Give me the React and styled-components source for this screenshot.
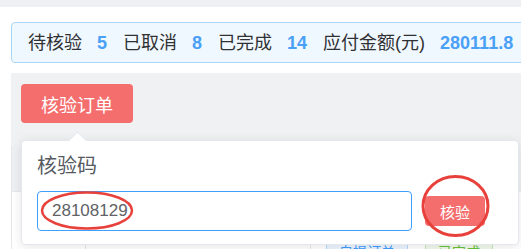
import React from "react";
import styled, { createGlobalStyle } from "styled-components";

const GlobalStyle = createGlobalStyle`
  html, body {
    margin: 0;
    padding: 0;
    background: #ffffff;
  }
  body {
    font-family: "Liberation Sans", "Noto Sans CJK SC", sans-serif;
    color: #303133;
  }
`;

const Page = styled.div`
  position: relative;
  width: 521px;
  height: 249px;
  overflow: hidden;
  background: #ffffff;
`;

const TopStrip = styled.div`
  height: 7px;
  background: #eef0f3;
`;

const Content = styled.div`
  width: 580px;
  padding-left: 11px;
  padding-top: 15px;
`;

const Summary = styled.div`
  display: flex;
  align-items: center;
  height: 39px;
  padding-left: 16px;
  background: #f0f8ff;
  border: 1px solid #a8d6f7;
  border-radius: 4px;
`;

const Label = styled.span`
  font-size: 18px;
  line-height: 24px;
  color: #303133;
  white-space: nowrap;
`;

const Count = styled.span`
  font-size: 18px;
  font-weight: bold;
  line-height: 24px;
  color: #4aa0f6;
  margin: 0 16px 0 15px;
`;

const Toolbar = styled.div`
  margin-top: 10px;
  height: 73px;
  padding: 11px 10px 0;
  box-sizing: border-box;
  background: #f0f1f3;
`;

const DangerButton = styled.button`
  height: 39px;
  padding: 0 ${(p) => p.$pad || 20}px;
  border: none;
  border-radius: 4px;
  background: #f56e6e;
  color: #ffffff;
  font-family: "Liberation Sans", "Noto Sans CJK SC", sans-serif;
  font-size: ${(p) => p.$size || 18}px;
  cursor: pointer;
`;

const Table = styled.div`
  border-left: 1px solid #e6e8ec;
`;

const HeadRow = styled.div`
  display: grid;
  grid-template-columns: 74px 225px 1fr;
  height: 45px;
  background: #eef0f4;
  border-bottom: 1px solid #e6e8ec;
`;

const BodyRow = styled.div`
  display: grid;
  grid-template-columns: 74px 225px 1fr;
  height: 90px;
`;

const Cell = styled.div`
  display: flex;
  align-items: flex-start;
  gap: 17px;
  padding: 46px 0 0 15px;
  border-right: 1px solid #e6e8ec;
`;

const Tag = styled.span`
  display: inline-block;
  height: 28px;
  line-height: 26px;
  padding: 0 12px;
  font-size: 14px;
  border-radius: 4px;
  border: 1px solid ${(p) => (p.$green ? "#c2e7b0" : "#b3d8ff")};
  background: ${(p) => (p.$green ? "#f0f9eb" : "#ecf5ff")};
  color: ${(p) => (p.$green ? "#67c23a" : "#409eff")};
`;

const Popover = styled.div`
  position: absolute;
  left: 21px;
  top: 140px;
  width: 498px;
  height: 105px;
  box-sizing: border-box;
  padding: 11px 15px 0;
  background: #ffffff;
  border: 1px solid #e4e7ed;
  border-radius: 4px;
  box-shadow: 0 2px 12px rgba(0, 0, 0, 0.1);

  &::before {
    content: "";
    position: absolute;
    left: 49px;
    top: -7px;
    width: 12px;
    height: 12px;
    background: #ffffff;
    border-left: 1px solid #e4e7ed;
    border-top: 1px solid #e4e7ed;
    transform: rotate(45deg);
  }
`;

const PopTitle = styled.div`
  font-size: 20px;
  line-height: 28px;
  color: #555a60;
`;

const FormRow = styled.div`
  display: flex;
  align-items: center;
  gap: 13px;
  margin-top: 11px;
`;

const CodeInput = styled.div`
  width: 375px;
  height: 40px;
  box-sizing: border-box;
  display: flex;
  align-items: center;
  padding-left: 14px;
  border: 1px solid #409eff;
  border-radius: 4px;
  font-size: 17px;
  color: #606266;
`;

const Marks = styled.svg`
  position: absolute;
  left: 0;
  top: 0;
  pointer-events: none;
`;

export default function App() {
  return (
    <Page>
      <GlobalStyle />
      <TopStrip />
      <Content>
        <Summary>
          <Label>待核验</Label>
          <Count>5</Count>
          <Label>已取消</Label>
          <Count>8</Count>
          <Label>已完成</Label>
          <Count>14</Count>
          <Label>应付金额(元)</Label>
          <Count>280111.8</Count>
        </Summary>
        <Toolbar>
          <DangerButton>核验订单</DangerButton>
        </Toolbar>
        <Table>
          <HeadRow>
            <Cell />
            <Cell />
            <Cell />
          </HeadRow>
          <BodyRow>
            <Cell />
            <Cell />
            <Cell>
              <Tag>自提订单</Tag>
              <Tag $green>已完成</Tag>
            </Cell>
          </BodyRow>
        </Table>
      </Content>

      <Popover>
        <PopTitle>核验码</PopTitle>
        <FormRow>
          <CodeInput>28108129</CodeInput>
          <DangerButton $pad={15} $size={15} style={{ height: 30, width: 60 }}>
            核验
          </DangerButton>
        </FormRow>
      </Popover>

      <Marks width="521" height="249" viewBox="0 0 521 249">
        <ellipse cx="87" cy="210.5" rx="45" ry="18" fill="none" stroke="#e8413b" strokeWidth="2.5" />
        <ellipse cx="455.5" cy="206" rx="32.5" ry="29.5" fill="none" stroke="#e8413b" strokeWidth="3" />
      </Marks>
    </Page>
  );
}
